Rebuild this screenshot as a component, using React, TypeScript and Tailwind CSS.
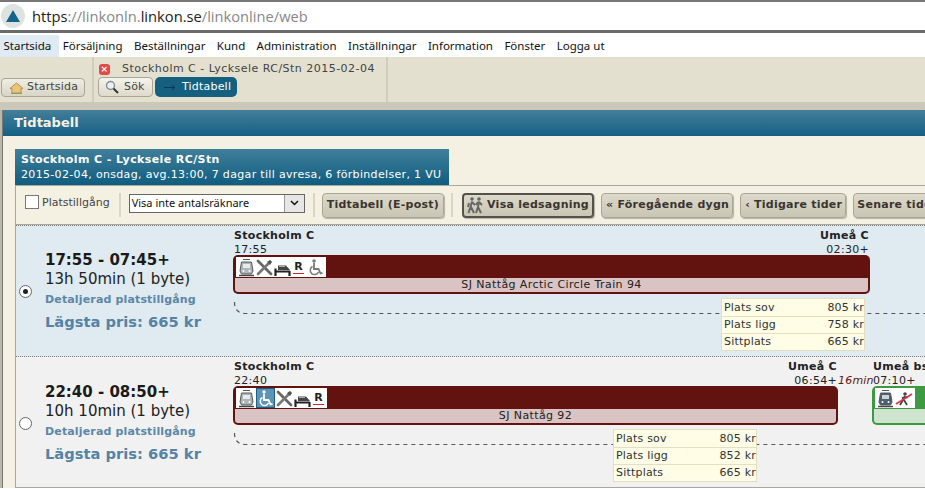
import type { ReactNode } from "react";

const menuItems = ["Startsida", "Försäljning", "Beställningar", "Kund", "Administration", "Inställningar", "Information", "Fönster", "Logga ut"];

function TrainIcon({ dark }: { dark?: boolean }) {
    return (
        <svg width="17" height="19" viewBox="0 0 17 19" className="shrink-0">
            <path d="M5 1.500h7M3.500 4h10l1.500 9-1.500 3h-10L2 13z" fill={dark ? "#4f5f6e" : "#aeb4b8"} stroke="#55585c" strokeWidth="1" />
            <rect x="5" y="6" width="7" height="4" fill={dark ? "#c9d3da" : "#e6ebee"} />
            <circle cx="5.500" cy="13" r="1" fill="#fff" />
            <circle cx="11.500" cy="13" r="1" fill="#fff" />
            <path d="M1 17.500h15" stroke="#444" strokeWidth="1.500" />
        </svg>
    );
}

function CutleryIcon() {
    return (
        <svg width="17" height="17" viewBox="0 0 17 17" className="shrink-0">
            <path d="M2 2l13 13" stroke="#666" strokeWidth="2.800" strokeLinecap="round" />
            <path d="M14 3L2 15" stroke="#777" strokeWidth="2.600" strokeLinecap="round" />
            <path d="M11 3l3-2 2 2-2 3z" fill="#555" />
        </svg>
    );
}

function BedIcon() {
    return (
        <svg width="17" height="14" viewBox="0 0 17 14" className="mt-[4px] shrink-0">
            <path d="M1.500 14V6.500M15.500 14V9M1 9.500h15" fill="none" stroke="#222" strokeWidth="2.200" />
            <path d="M4 8V3.500h8L16 8z" fill="#444" />
            <path d="M5 4.500h6" stroke="#aaa" strokeWidth="1" />
        </svg>
    );
}

function ReservationIcon() {
    return (
        <span className="flex w-[13px] shrink-0 flex-col items-center text-[11px] leading-[13px] font-bold text-[#222]">
            R
            <span className="h-px w-[11px] bg-[#d8222a]" />
        </span>
    );
}

function WheelchairIcon({ active }: { active?: boolean }) {
    const c = active ? "#fff" : "#777";
    const icon = (
        <svg width="16" height="17" viewBox="0 0 16 17" className="shrink-0">
            <circle cx="6" cy="2" r="1.700" fill={c} />
            <path d="M6 4v6h4.500l2 4.500 2-.7" fill="none" stroke={c} strokeWidth="1.800" />
            <path d="M4.500 7.500a4.300 4.300 0 1 0 6 5.500" fill="none" stroke={c} strokeWidth="1.500" />
        </svg>
    );
    if (active) {
        return <span className="flex h-[20px] w-[19px] shrink-0 items-center justify-center border border-[#1d5f82] bg-[#5d93b5]">{icon}</span>;
    }
    return icon;
}

function WalkersIcon() {
    return (
        <svg width="17" height="17" viewBox="0 0 17 17" className="shrink-0">
            <circle cx="5" cy="2" r="1.800" fill="#666" />
            <circle cx="12" cy="2" r="1.800" fill="#666" />
            <path d="M5 4.500L3.500 10 1.500 16M4 10l3 6M2 6L1 10M5 5l3 3M12 4.500l-1 5.500-2 6M11 10l3 6M12 5l3 3M11 5L9 8" fill="none" stroke="#666" strokeWidth="2" />
        </svg>
    );
}

function NoWalkIcon() {
    return (
        <svg width="18" height="15" viewBox="0 0 18 15" className="shrink-0">
            <circle cx="10" cy="3" r="1.800" fill="#444" />
            <path d="M10 5L8 9l-3 5M9 9l3 5M7 7l6-1" fill="none" stroke="#444" strokeWidth="1.800" />
            <path d="M1 13L17 3" stroke="#d93a4a" strokeWidth="1.800" />
        </svg>
    );
}

function ToolButton({ children, active }: { children: ReactNode; active?: boolean }) {
    return (
        <button className={`flex h-[25px] shrink-0 items-center rounded-[4px] bg-gradient-to-b from-[#dedacb] to-[#c9c5b4] font-['DejaVu_Sans',sans-serif] text-[11px] font-bold tracking-[0.25px] whitespace-nowrap text-[#3a3530] shadow-[1px_1px_1px_#b5b2a4] ${active ? "border-2 border-[#55524d] px-[3px]" : "border border-[#a9a697] px-[3px]"}`}>
            {children}
        </button>
    );
}

function Sep() {
    return <span className="h-[24px] w-[2px] shrink-0 bg-[#d9d6c5]" />;
}

function PriceBox({ prices, left }: { prices: [string, string][]; left: number }) {
    return (
        <div
            className="absolute top-[72px] w-[144px] border border-[#e4dfc3] bg-[#fffde6] text-[11px] leading-[16px] tracking-[0.2px] text-[#333]"
            style={{ left }}
        >
            {prices.map(([name, price], i) => (
                <div key={name} className={`flex h-[17px] items-center justify-between pl-[2px] ${i > 0 ? "border-t border-[#e4dfc3]" : ""}`}>
                    <span>{name}</span>
                    <span>{price}</span>
                </div>
            ))}
        </div>
    );
}

function Segment({ width, color, inner, from, dep, to, arr, label, children }: { width: number; color: string; inner: string; from: string; dep: string; to: string; arr: string; label?: string; children: ReactNode }) {
    return (
        <div className="shrink-0" style={{ width }}>
            <div className="flex justify-between px-[1px] text-[11px] leading-[14px] font-bold tracking-[0.3px] whitespace-nowrap">
                <span>{from}</span>
                <span>{to}</span>
            </div>
            <div className="flex justify-between px-[1px] text-[11px] leading-[13px] tracking-[0.3px] whitespace-nowrap">
                <span>{dep}</span>
                <span>{arr}</span>
            </div>
            <div className="mt-[-1px] flex h-[39px] flex-col rounded-[5px] p-[2px]" style={{ backgroundColor: color }}>
                <div className="h-[20px] shrink-0">
                    <div className="ml-[1px] flex h-[20px] w-fit min-w-[36px] items-center gap-[1px] bg-white px-[2px]">{children}</div>
                </div>
                <div className="mt-[1px] flex h-[14px] items-center justify-center rounded-b-[3px] text-[11px] tracking-[0.4px] text-[#222]" style={{ backgroundColor: inner }}>
                    {label}
                </div>
            </div>
        </div>
    );
}

function Row({ bg, times, duration, selected, children, infoTop, radioTop }: { bg: string; times: string; duration: string; selected?: boolean; children: ReactNode; infoTop: string; radioTop: string }) {
    return (
        <div className={`flex h-[131px] border-t border-dotted border-[#777] ${bg}`}>
            <div className="flex w-[217px] shrink-0 items-start">
                <span className={`ml-[3px] flex h-[13px] w-[13px] shrink-0 items-center justify-center rounded-full border border-[#666] bg-white ${radioTop}`}>
                    {selected && <span className="h-[5px] w-[5px] rounded-full bg-[#222]" />}
                </span>
                <div className={`ml-[13px] ${infoTop}`}>
                    <div className="text-[15px] leading-[17px] font-bold text-[#1a1a1a]">{times}</div>
                    <div className="mt-[2px] text-[15px] leading-[17px] text-[#222]">{duration}</div>
                    <div className="mt-[5px] text-[11px] leading-[14px] font-bold tracking-[0.15px] text-[#5b87a8]">Detaljerad platstillgång</div>
                    <div className="mt-[6px] text-[14.700px] leading-[18px] font-bold text-[#5583a6]">Lägsta pris: 665 kr</div>
                </div>
            </div>
            <div className="relative min-w-0 flex-1 overflow-hidden pt-[3px]">
                {children}
            </div>
        </div>
    );
}

function Dashed() {
    return (
        <svg width="700" height="16" viewBox="0 0 700 16" className="absolute top-[76px] left-0">
            <path d="M1.500 0c0 7 3 11 10 11.500H700" fill="none" stroke="#555" strokeWidth="1.200" strokeDasharray="4 4" />
        </svg>
    );
}

export default function App() {
    return (
        <div className="h-[489px] w-[925px] overflow-hidden bg-white font-['DejaVu_Sans',sans-serif]">
            {/* adressfält */}
            <div className="flex h-[33px] items-center border-t-2 border-b-[3px] border-t-[#777] border-b-[#6b6b6b] bg-white">
                <span className="ml-[1px] flex h-[24px] w-[24px] items-center justify-center rounded-full bg-[#dfe3df]">
                    <svg width="14" height="12" viewBox="0 0 14 12"><path d="M7 0l7 12H0z" fill="#15648c" /></svg>
                </span>
                <span className="ml-[7px] font-['Open_Sans',sans-serif] text-[14.700px] text-[#888]">
                    <span className="text-[#222]">https</span>://linkonln.<span className="text-[#222]">linkon.se</span>/linkonline/web
                </span>
            </div>

            {/* meny */}
            <div className="mt-[2px] flex h-[22px] items-center font-['Noto_Sans',sans-serif] text-[11.500px] text-[#111]">
                {menuItems.map((item, i) => (
                    <span key={item} className={`flex h-full items-center pr-[7.900px] pl-[3.500px] ${i === 0 ? "bg-[#dfeaf2]" : ""}`}>{item}</span>
                ))}
            </div>

            {/* flikrad */}
            <div className="flex h-[45px] items-stretch bg-[#e3e0d0] text-[11px] tracking-[0.2px] text-[#444]">
                <div className="flex w-[92px] items-end pb-[5px] pl-[1px]">
                    <button className="flex h-[19px] w-[84px] items-center gap-[4px] rounded-[4px] border border-[#a9a697] bg-gradient-to-b from-[#f0eee3] to-[#d8d5c6] pl-[8px]">
                        <svg width="13" height="12" viewBox="0 0 14 13"><path d="M7 1L0 7h2v5h10V7h2z" fill="#e8c47a" stroke="#b5763a" strokeWidth="0.800" /><path d="M1 12.500h12" stroke="#6aa84f" strokeWidth="1" /></svg>
                        Startsida
                    </button>
                </div>
                <div className="flex w-[296px] flex-col border-x-2 border-[#d0cdbd] pl-[4px]">
                    <div className="mt-[5px] ml-[1px] flex h-[14px] items-center gap-[12px] tracking-[0.47px]">
                        <span className="flex h-[11px] w-[11px] items-center justify-center rounded-[3px] bg-[#e24a4a] text-[9px] leading-none font-bold text-white">×</span>
                        <span>Stockholm C - Lycksele RC/Stn 2015-02-04</span>
                    </div>
                    <div className="mt-[1px] flex gap-[2px]">
                        <button className="flex h-[20px] w-[55px] items-center gap-[5px] rounded-[4px] border border-[#a9a697] bg-gradient-to-b from-[#f5f4ec] to-[#dddacb] pl-[6px]">
                            <svg width="14" height="14" viewBox="0 0 14 14"><circle cx="5.500" cy="5.500" r="4" fill="#eaf1f6" stroke="#8a8f94" strokeWidth="1.400" /><path d="M8.500 8.500l4.500 4.500" stroke="#333" strokeWidth="2" /></svg>
                            Sök
                        </button>
                        <button className="flex h-[20px] w-[82px] items-center gap-[6px] rounded-[5px] bg-[#15607f] pl-[9px] text-white">
                            <svg width="12" height="7" viewBox="0 0 12 7"><path d="M0 3.500h10M8 1l3 2.500L8 6" fill="none" stroke="#083a50" strokeWidth="1" /></svg>
                            Tidtabell
                        </button>
                    </div>
                </div>
            </div>
            <div className="h-[8px] bg-[#cbc7b9]" />

            {/* panel */}
            <div className="bg-[#bdb9aa] pl-[2px]">
                <div className="border-l border-[#777]">
                    <div className="flex h-[26px] items-center bg-gradient-to-b from-[#427f9a] to-[#136084] pl-[11px] text-[13px] font-bold text-[#f4f1e4]">Tidtabell</div>
                    <div className="bg-[#f5f1e2] pt-[13px] pl-[12px]">
                        <div className="flex h-[36px] w-[434px] flex-col justify-center bg-gradient-to-b from-[#3f7f9a] to-[#0c5d80] pl-[6px] text-[11px] leading-[15px] tracking-[0.33px] text-white">
                            <div className="font-bold tracking-[0.4px]">Stockholm C - Lycksele RC/Stn</div>
                            <div>2015-02-04, onsdag, avg.13:00, 7 dagar till avresa, 6 förbindelser, 1 VU</div>
                        </div>
                        <div className="border-t border-l border-[#aaa79c]">
                            <div className="flex h-[38px] items-center gap-[7px] pl-[9px]">
                                <span className="mt-[-6px] mr-[-4px] h-[14px] w-[14px] shrink-0 border border-[#777] bg-white" />
                                <span className="mt-[-3px] mr-[2px] text-[11px] text-[#444]">Platstillgång</span>
                                <Sep />
                                <div className="mx-[1px] mt-[-4px] flex h-[19px] w-[176px] shrink-0 items-center justify-between border border-[#666] bg-white pl-[2px] font-['Noto_Sans',sans-serif] text-[11px] text-[#111]">
                                    Visa inte antalsräknare
                                    <span className="flex h-full w-[20px] items-center justify-center border-l border-[#999] bg-[#e6e6e6]">
                                        <svg width="9" height="6" viewBox="0 0 9 6"><path d="M1 1l3.500 3.500L8 1" fill="none" stroke="#111" strokeWidth="1.500" /></svg>
                                    </span>
                                </div>
                                <Sep />
                                <ToolButton><span className="px-[1px]">Tidtabell (E-post)</span></ToolButton>
                                <Sep />
                                <span className="ml-[2px] shrink-0"><ToolButton active><WalkersIcon /><span className="ml-[3px]">Visa ledsagning</span></ToolButton></span>
                                <ToolButton><span className="ml-[1px]">« Föregående dygn</span></ToolButton>
                                <ToolButton><span className="ml-[1px]">‹ Tidigare tider</span></ToolButton>
                                <ToolButton>Senare tider ›</ToolButton>
                            </div>
                            <div className="border-t border-[#aaa79c] text-[#222]">
                                <Row bg="bg-[#dfeaf1]" times="17:55 - 07:45+" duration="13h 50min (1 byte)" selected infoTop="mt-[26px]" radioTop="mt-[59px]">
                                    <Dashed />
                                    <Segment width={637} color="#63130f" inner="#d9c3c3" from="Stockholm C" dep="17:55" to="Umeå C" arr="02:30+" label="SJ Nattåg Arctic Circle Train 94">
                                        <TrainIcon /><CutleryIcon /><BedIcon /><ReservationIcon /><span className="ml-[2px]"><WheelchairIcon /></span>
                                    </Segment>
                                    <PriceBox left={488} prices={[["Plats sov", "805 kr"], ["Plats ligg", "758 kr"], ["Sittplats", "665 kr"]]} />
                                </Row>
                                <Row bg="bg-[#f1f1f1]" times="22:40 - 08:50+" duration="10h 10min (1 byte)" infoTop="mt-[27px]" radioTop="mt-[60px]">
                                    <Dashed />
                                    <div className="flex">
                                        <Segment width={605} color="#63130f" inner="#d9c3c3" from="Stockholm C" dep="22:40" to="Umeå C" arr="06:54+" label="SJ Nattåg 92">
                                            <TrainIcon /><WheelchairIcon active /><CutleryIcon /><BedIcon /><ReservationIcon />
                                        </Segment>
                                        <div className="w-[34px] shrink-0 pt-[14px] text-[11px] leading-[13px] tracking-[0.2px] whitespace-nowrap text-[#63130f] italic">16min</div>
                                        <Segment width={200} color="#3d9a42" inner="#cfe4cf" from="Umeå bsTerminal" dep="07:10+" to="" arr="">
                                            <TrainIcon dark /><NoWalkIcon />
                                        </Segment>
                                    </div>
                                    <PriceBox left={380} prices={[["Plats sov", "805 kr"], ["Plats ligg", "852 kr"], ["Sittplats", "665 kr"]]} />
                                </Row>
                                <div className="h-px bg-[#aaa79c]" />
                            </div>
                        </div>
                    </div>
                </div>
            </div>
        </div>
    );
}
